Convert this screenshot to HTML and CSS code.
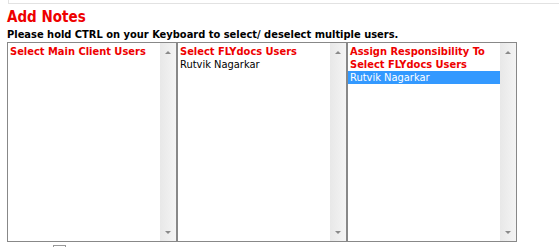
FILE: index.html
```html
<!DOCTYPE html>
<html>
<head>
<meta charset="utf-8">
<link rel="stylesheet" href="styles.css">
</head>
<body>
<div class="topframe"></div>
<h1 class="title">Add Notes</h1>
<p class="hint">Please hold CTRL on your Keyboard to select/ deselect multiple users.</p>
<div class="lists">
  <div class="listbox">
    <div class="items">
      <div class="group">Select Main Client Users</div>
    </div>
    <div class="scroll"><span class="up"></span><span class="down"></span></div>
  </div>
  <div class="listbox">
    <div class="items">
      <div class="group">Select FLYdocs Users</div>
      <div class="opt">Rutvik Nagarkar</div>
    </div>
    <div class="scroll"><span class="up"></span><span class="down"></span></div>
  </div>
  <div class="listbox">
    <div class="items">
      <div class="group">Assign Responsibility To Select FLYdocs Users</div>
      <div class="opt selected">Rutvik Nagarkar</div>
    </div>
    <div class="scroll"><span class="up"></span><span class="down"></span></div>
  </div>
</div>
<div class="footer"><span class="check"></span></div>
</body>
</html>
```

FILE: styles.css
```css
html, body {
  margin: 0;
  padding: 0;
  background: #fff;
}
body {
  font-family: "DejaVu Sans Condensed", "DejaVu Sans", sans-serif;
  font-size: 11px;
  color: #000;
  overflow: hidden;
}
.topframe {
  margin-left: 8px;
  height: 3px;
  border-left: 1px solid #e2e2e2;
  border-bottom: 1px solid #e2e2e2;
}
.title {
  margin: 4px 0 0 7px;
  font-size: 15px;
  line-height: 19px;
  font-weight: bold;
  color: #ee0000;
}
.hint {
  margin: 1px 0 0 7px;
  font-weight: bold;
  font-size: 11px;
  line-height: 14px;
}
.lists {
  display: flex;
  margin-left: 7px;
}
.listbox {
  width: 168px;
  height: 198px;
  border: 1px solid #888;
  display: flex;
}
.items {
  flex: 1;
  padding-top: 2px;
}
.group {
  color: #ee0000;
  font-weight: bold;
  font-size: 11px;
  line-height: 13px;
  padding: 0 2px;
}
.opt {
  line-height: 13px;
  padding: 0 2px;
}
.opt.selected {
  background: #3399ff;
  color: #fff;
}
.scroll {
  width: 16px;
  background: linear-gradient(to right, #e8e8e8, #f4f4f4);
  display: flex;
  flex-direction: column;
  justify-content: space-between;
  align-items: center;
  padding: 8px 0 7px;
}
.up, .down {
  width: 0;
  height: 0;
  border-left: 3px solid transparent;
  border-right: 3px solid transparent;
}
.up { border-bottom: 3px solid #8a8a8a; }
.down { border-top: 3px solid #8a8a8a; }
.footer {
  padding: 3px 0 0 53px;
}
.check {
  display: block;
  width: 11px;
  height: 11px;
  border: 1px solid #999;
}
```
